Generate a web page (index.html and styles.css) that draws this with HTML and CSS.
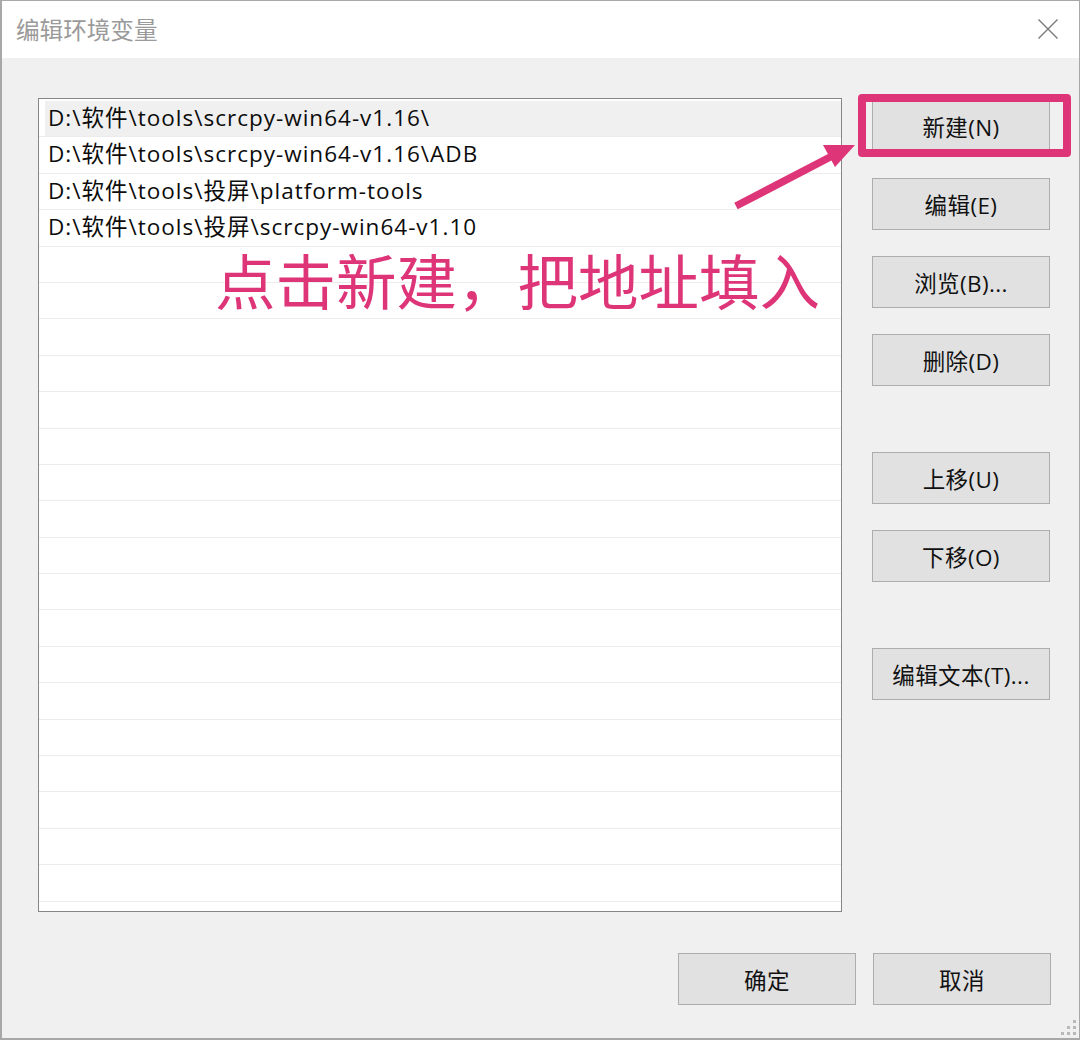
FILE: index.html
```html
<!DOCTYPE html>
<html lang="zh-CN">
<head>
<meta charset="utf-8">
<title>编辑环境变量</title>
<link rel="stylesheet" href="styles.css">
</head>
<body>
<div class="window">
  <div class="titlebar">
    <span class="title">编辑环境变量</span>
    <svg class="close" width="20" height="20" viewBox="0 0 20 20"><path d="M0.5 0.5 L19.5 19.5 M19.5 0.5 L0.5 19.5" stroke="#7a7a7a" stroke-width="1.4" fill="none"/></svg>
  </div>
  <div class="main">
    <div class="list">
      <div class="row selected">D:\软件\tools\scrcpy-win64-v1.16\</div>
      <div class="row">D:\软件\tools\scrcpy-win64-v1.16\ADB</div>
      <div class="row">D:\软件\tools\投屏\platform-tools</div>
      <div class="row">D:\软件\tools\投屏\scrcpy-win64-v1.10</div>
      <div class="row"></div><div class="row"></div><div class="row"></div><div class="row"></div>
      <div class="row"></div><div class="row"></div><div class="row"></div><div class="row"></div>
      <div class="row"></div><div class="row"></div><div class="row"></div><div class="row"></div>
      <div class="row"></div><div class="row"></div><div class="row"></div><div class="row"></div>
      <div class="row"></div><div class="row"></div><div class="row"></div>
    </div>
    <div class="side">
      <div class="group">
        <button class="btn">新建(N)</button>
        <button class="btn">编辑(E)</button>
        <button class="btn">浏览(B)...</button>
        <button class="btn">删除(D)</button>
      </div>
      <div class="group">
        <button class="btn">上移(U)</button>
        <button class="btn">下移(O)</button>
      </div>
      <div class="group">
        <button class="btn">编辑文本(T)...</button>
      </div>
    </div>
  </div>
  <div class="footer">
    <button class="btn">确定</button>
    <button class="btn">取消</button>
  </div>
  <div class="grip">
    <i class="d1"></i><i class="d2"></i><i class="d3"></i><i class="d4"></i><i class="d5"></i><i class="d6"></i>
  </div>

  <div class="highlight"></div>
  <svg class="arrow" width="140" height="80" viewBox="0 0 140 80">
    <path d="M5 68 L105 16" stroke="#de3578" stroke-width="7.5" stroke-linecap="butt" fill="none"/>
    <polygon points="124,7 92,7 104,29" fill="#de3578"/>
  </svg>
  <div class="note">点击新建，把地址填入</div>
</div>
</body>
</html>
```
FILE: styles.css
```css
* { box-sizing: border-box; }
html, body { margin: 0; padding: 0; background: #f0f0f0; }
body {
  font-family: "Open Sans", "Noto Sans CJK SC", sans-serif;
  color: #111;
}
.window {
  position: relative;
  width: 1080px;
  height: 1040px;
  border: 1px solid #a8a8a8;
  border-left: 2px solid #a8a8a8;
  border-bottom: 2px solid #a8a8a8;
  background: #f0f0f0;
  overflow: hidden;
}
.titlebar {
  height: 57px;
  background: #ffffff;
  display: flex;
  align-items: center;
  justify-content: space-between;
  padding: 0 21px 0 14px;
}
.title {
  font-family: "Noto Sans CJK SC", sans-serif;
  font-size: 23.6px;
  color: #9a9a9a;
  padding-bottom: 2px;
}
.close { display: block; margin-top: -2px; }
.main {
  display: flex;
  padding: 40px 0 0 36px;
}
.list {
  width: 804px;
  height: 814px;
  border: 1px solid #868686;
  background: #fff;
  padding-top: 2px;
  overflow: hidden;
}
.row {
  height: 36.4px;
  border-bottom: 1px solid #ececec;
  padding-left: 9px;
  font-size: 22.5px;
  letter-spacing: 1px;
  line-height: 34px;
  white-space: nowrap;
  color: #0c0c0c;
}
.row.selected {
  background: linear-gradient(to right, #fff 6px, #f0f0f0 6px);
}
.side {
  margin-left: 30px;
  padding-top: 2px;
  display: flex;
  flex-direction: column;
  gap: 66px;
}
.group {
  display: flex;
  flex-direction: column;
  gap: 26px;
}
.btn {
  width: 178px;
  height: 52px;
  background: #e1e1e1;
  border: 1px solid #adadad;
  font-family: "Open Sans", "Noto Sans CJK SC", sans-serif;
  font-size: 22.5px;
  letter-spacing: 0.4px;
  color: #111;
  padding: 0;
  margin: 0;
}
.footer {
  display: flex;
  justify-content: flex-end;
  gap: 17px;
  padding: 41px 28px 0 0;
}
.grip { position: absolute; right: 3px; bottom: 3px; width: 16px; height: 16px; }
.grip i { position: absolute; width: 3px; height: 3px; background: #b9b9b9; }
.grip .d1 { right: 0; bottom: 0; }
.grip .d2 { right: 6px; bottom: 0; }
.grip .d3 { right: 12px; bottom: 0; }
.grip .d4 { right: 0; bottom: 6px; }
.grip .d5 { right: 6px; bottom: 6px; }
.grip .d6 { right: 0; bottom: 12px; }

.highlight {
  position: absolute;
  left: 856px;
  top: 93px;
  width: 213px;
  height: 63px;
  border: 8px solid #de3578;
  border-radius: 4px;
}
.arrow {
  position: absolute;
  left: 729px;
  top: 137px;
}
.note {
  position: absolute;
  left: 213px;
  top: 248px;
  font-family: "Noto Sans CJK SC", sans-serif;
  font-size: 60.5px;
  line-height: 60px;
  color: #de3578;
  white-space: nowrap;
}
```
